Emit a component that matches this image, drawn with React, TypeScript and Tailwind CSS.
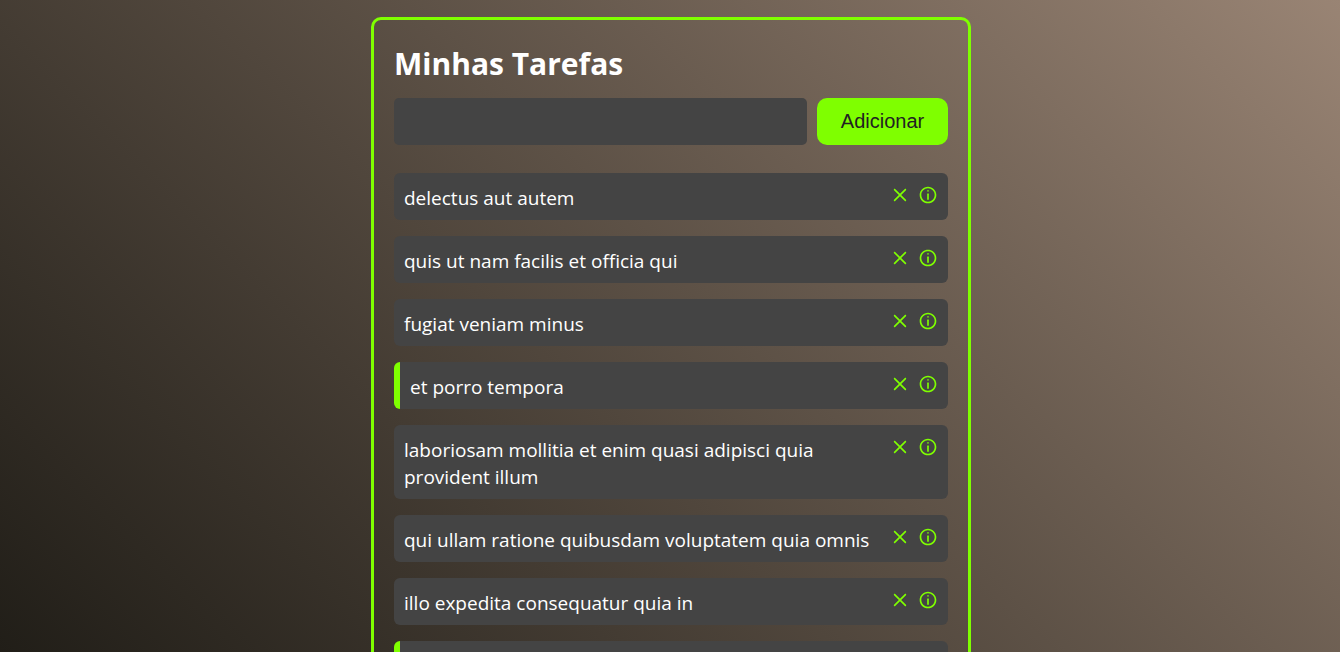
import { useState, type FormEvent } from "react";
import { CgClose, CgInfo } from "react-icons/cg";

type Task = { id: number; title: string; completed: boolean };

const initialTasks: Task[] = [
  { id: 1, title: "delectus aut autem", completed: false },
  { id: 2, title: "quis ut nam facilis et officia qui", completed: false },
  { id: 3, title: "fugiat veniam minus", completed: false },
  { id: 4, title: "et porro tempora", completed: true },
  { id: 5, title: "laboriosam mollitia et enim quasi adipisci quia provident illum", completed: false },
  { id: 6, title: "qui ullam ratione quibusdam voluptatem quia omnis", completed: false },
  { id: 7, title: "illo expedita consequatur quia in", completed: false },
  { id: 8, title: "", completed: true },
];

function TaskRow({ task, onToggle, onRemove }: { task: Task; onToggle: () => void; onRemove: () => void }) {
  return (
    <li
      className={
        task.completed
          ? "flex items-start justify-between rounded-md border-l-6 border-[#7fff00] bg-[#444] px-[10px] pt-3 pb-2"
          : "flex items-start justify-between rounded-md bg-[#444] px-[10px] pt-3 pb-2"
      }
    >
      <button
        type="button"
        onClick={onToggle}
        aria-label={task.title || "Tarefa"}
        className="min-h-[27px] min-w-0 flex-1 cursor-pointer text-left text-[19px] leading-[27px] text-white"
      >
        {task.title}
      </button>
      <div className="ml-3 flex shrink-0 gap-2 text-xl text-[#7fff00]">
        <button type="button" aria-label="Remover" onClick={onRemove} className="cursor-pointer">
          <CgClose />
        </button>
        <button type="button" aria-label="Detalhes" className="cursor-pointer">
          <CgInfo />
        </button>
      </div>
    </li>
  );
}

export default function App() {
  const [tasks, setTasks] = useState<Task[]>(initialTasks);
  const [title, setTitle] = useState("");

  const addTask = (event: FormEvent) => {
    event.preventDefault();
    if (!title.trim()) return;
    setTasks([...tasks, { id: Date.now(), title, completed: false }]);
    setTitle("");
  };

  return (
    <div className="h-screen overflow-y-auto bg-linear-45 from-[#211e18] to-[#998474] pt-[17px] pr-4 pl-[18px] font-['Open_Sans','Noto_Sans',sans-serif] [scrollbar-width:none]">
      <main className="mx-auto w-full max-w-[600px] rounded-[10px] border-3 border-[#7fff00] p-5">
        <h1 className="pt-1 text-[30px] leading-[40px] font-bold text-white">Minhas Tarefas</h1>
        <form onSubmit={addTask} className="mt-[14px] flex gap-[10px]">
          <input
            type="text"
            aria-label="Nova tarefa"
            value={title}
            onChange={(event) => setTitle(event.target.value)}
            className="h-[47px] min-w-0 flex-1 rounded-[5px] bg-[#444] px-[10px] text-lg text-[#eee] outline-none"
          />
          <button
            type="submit"
            className="h-[47px] w-[131px] cursor-pointer rounded-[10px] bg-[#7fff00] pb-[2px] font-['Liberation_Sans',Arial,sans-serif] text-xl text-[#222]"
          >
            Adicionar
          </button>
        </form>
        <ul className="mt-7 flex flex-col gap-4">
          {tasks.map((task) => (
            <TaskRow
              key={task.id}
              task={task}
              onToggle={() => setTasks(tasks.map((t) => (t.id === task.id ? { ...t, completed: !t.completed } : t)))}
              onRemove={() => setTasks(tasks.filter((t) => t.id !== task.id))}
            />
          ))}
        </ul>
      </main>
    </div>
  );
}
